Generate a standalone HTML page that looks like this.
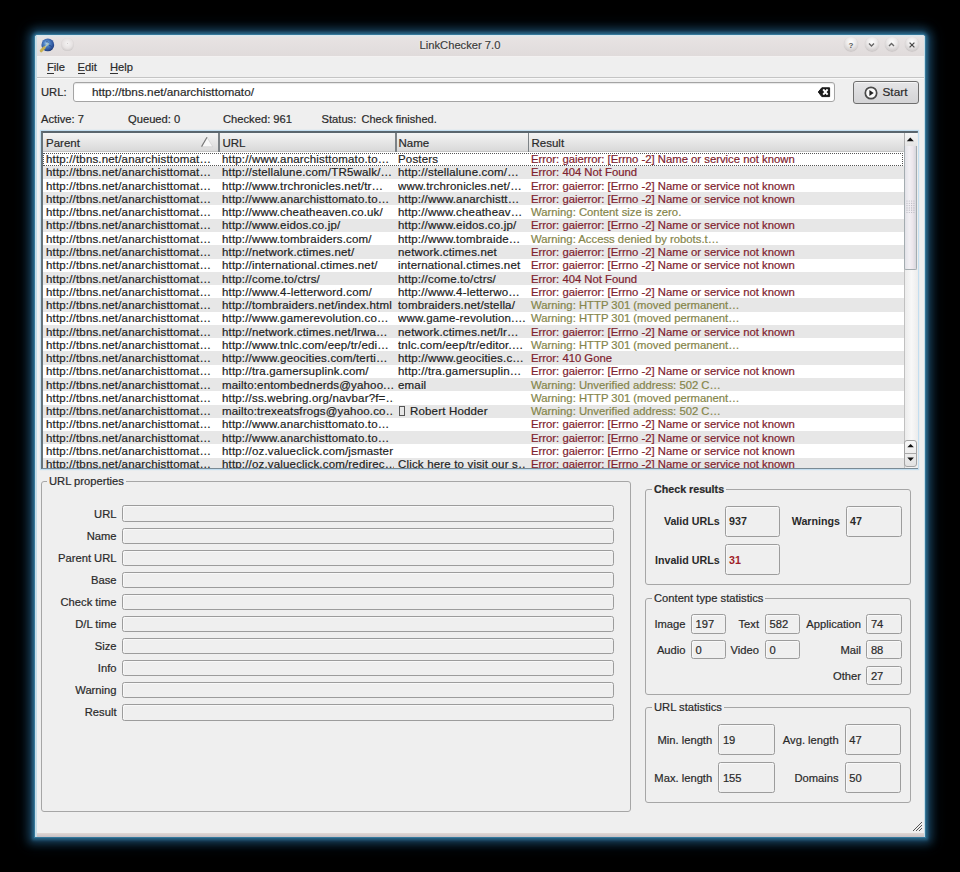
<!DOCTYPE html>
<html><head><meta charset="utf-8"><title>LinkChecker 7.0</title>
<style>
html,body{margin:0;padding:0;}
body{width:960px;height:872px;background:#000;position:relative;overflow:hidden;font-family:"Liberation Sans", sans-serif;}
.t{position:absolute;white-space:pre;line-height:14px;-webkit-text-stroke:0.2px currentColor;}
</style></head><body>
<div style="position:absolute;left:35px;top:35px;width:890px;height:801.5px;background:#efefef;border-radius:3px 3px 0 0;box-shadow:0 0 0 1px #35789a,0 0 3px 3px #286282,0 0 8px 6px #18405a,0 0 15px 8px #07141f;"></div>
<div style="position:absolute;left:35px;top:35px;width:890px;height:20.5px;background:linear-gradient(#e8e4e4,#e0dbdb);border-radius:3px 3px 0 0;"></div>
<div style="position:absolute;left:37px;top:35px;width:886px;height:2px;background:linear-gradient(#d8e8f0,#e4e6e8);"></div>
<div style="position:absolute;left:35px;top:55.5px;width:890px;height:1.5px;background:#f3f1f1;"></div>
<div class="t" style="left:460px;transform:translateX(-50%);top:38px;font-size:11.2px;color:#3c3c3c;font-weight:normal;text-shadow:0 0 2px #fff;">LinkChecker 7.0</div>
<svg style="position:absolute;left:38px;top:36px" width="18" height="18" viewBox="0 0 18 18"><defs><radialGradient id="g1" cx="0.42" cy="0.38" r="0.65"><stop offset="0" stop-color="#a8d0f0"/><stop offset="0.35" stop-color="#4f82c4"/><stop offset="0.8" stop-color="#2a4f98"/><stop offset="1" stop-color="#1c366e"/></radialGradient></defs><circle cx="9.8" cy="8.9" r="6.4" fill="url(#g1)"/><path d="M8 6 Q9 5 10.5 6.5 M11 9.5 Q13 9 13.5 11" stroke="#1e3a70" stroke-width="1" fill="none" opacity="0.6"/><path d="M10.5 7.5 L5 13" stroke="#b8c8b0" stroke-width="1.3"/><path d="M3.2 14.8 L6.2 11.8" stroke="#c8b050" stroke-width="3" stroke-linecap="round"/></svg>
<div style="position:absolute;left:61.3px;top:38.3px;width:12.6px;height:12.6px;border-radius:50%;background:radial-gradient(circle at 50% 42%,#cfcbcb 0%,#f2f0f0 10%,#e6e2e2 50%,#c6c2c2 85%,#aca8a8 100%);"></div>
<div style="position:absolute;left:844px;top:37px;width:14px;height:14px;border-radius:50%;background:radial-gradient(circle at 50% 36%,#fdfdfd 0%,#eceaea 40%,#d2cece 75%,#b2aeae 100%);box-shadow:0 0.5px 1px rgba(0,0,0,0.18);"></div>
<div style="position:absolute;left:864.5px;top:37px;width:14px;height:14px;border-radius:50%;background:radial-gradient(circle at 50% 36%,#fdfdfd 0%,#eceaea 40%,#d2cece 75%,#b2aeae 100%);box-shadow:0 0.5px 1px rgba(0,0,0,0.18);"></div>
<div style="position:absolute;left:884.5px;top:37px;width:14px;height:14px;border-radius:50%;background:radial-gradient(circle at 50% 36%,#fdfdfd 0%,#eceaea 40%,#d2cece 75%,#b2aeae 100%);box-shadow:0 0.5px 1px rgba(0,0,0,0.18);"></div>
<div style="position:absolute;left:905px;top:37px;width:14px;height:14px;border-radius:50%;background:radial-gradient(circle at 50% 36%,#fdfdfd 0%,#eceaea 40%,#d2cece 75%,#b2aeae 100%);box-shadow:0 0.5px 1px rgba(0,0,0,0.18);"></div>
<svg style="position:absolute;left:840px;top:35.5px" width="84" height="18" viewBox="0 0 84 18"><text x="11" y="11.8" font-family="Liberation Sans" font-weight="bold" font-size="8" fill="#555" text-anchor="middle">?</text><path d="M29 7.5 L31.5 10 L34 7.5" stroke="#666" stroke-width="1.4" fill="none"/><path d="M49 10 L51.5 7.5 L54 10" stroke="#666" stroke-width="1.4" fill="none"/><path d="M69.6 6.6 L74.4 11.4 M74.4 6.6 L69.6 11.4" stroke="#484848" stroke-width="1.25" fill="none"/></svg>
<div class="t" style="left:47px;top:60px;font-size:11.2px;color:#2a2a2a;font-weight:normal;">File</div>
<div class="t" style="left:77.5px;top:60px;font-size:11.2px;color:#2a2a2a;font-weight:normal;">Edit</div>
<div class="t" style="left:110px;top:60px;font-size:11.2px;color:#2a2a2a;font-weight:normal;">Help</div>
<div style="position:absolute;left:47px;top:73px;width:7px;height:1px;background:#333;"></div>
<div style="position:absolute;left:77.5px;top:73px;width:7.0px;height:1px;background:#333;"></div>
<div style="position:absolute;left:110px;top:73px;width:8px;height:1px;background:#333;"></div>
<div style="position:absolute;left:35px;top:76.8px;width:890px;height:1.0px;background:#c4c4c4;"></div>
<div style="position:absolute;left:35px;top:77.8px;width:890px;height:1.0px;background:#f8f8f8;"></div>
<div class="t" style="left:41px;top:85px;font-size:11.2px;color:#2a2a2a;font-weight:normal;">URL:</div>
<div style="position:absolute;left:73px;top:82px;width:762px;height:20px;box-sizing:border-box;background:#fff;border:1.5px solid #a4a4a4;border-radius:3px;box-shadow:inset 0 1px 1px rgba(0,0,0,0.10);"></div>
<div class="t" style="left:92px;top:85px;font-size:11.8px;color:#2a2a2a;font-weight:normal;">http://tbns.net/anarchisttomato/</div>
<svg style="position:absolute;left:817px;top:86px" width="14" height="12" viewBox="0 0 14 12"><path d="M1.3 6 L4.8 1.8 H12.6 V10.6 H4.8 Z" fill="#1a1a1a" stroke="#1a1a1a" stroke-width="1" stroke-linejoin="round"/><path d="M6.2 3.4 L10.6 8.6 M10.6 3.4 L6.2 8.6" stroke="#fff" stroke-width="2"/></svg>
<div style="position:absolute;left:853px;top:81px;width:66px;height:22.5px;box-sizing:border-box;background:linear-gradient(#e6e6e8,#dadadc 60%,#d4d4d6);border:1.5px solid #6e6e6e;border-radius:3px;box-shadow:inset 0 1px 0 rgba(255,255,255,0.6);"></div>
<svg style="position:absolute;left:864px;top:85.5px" width="14" height="14" viewBox="0 0 14 14"><circle cx="7" cy="7" r="5.7" fill="#fafafa" stroke="#4a4a4a" stroke-width="1.7"/><path d="M5.4 4.1 L9.7 7 L5.4 9.9 Z" fill="#222"/></svg>
<div class="t" style="left:882.5px;top:85px;font-size:11.8px;color:#2a2a2a;font-weight:normal;">Start</div>
<div class="t" style="left:41px;top:112px;font-size:11.2px;color:#2a2a2a;font-weight:normal;">Active: 7</div>
<div class="t" style="left:128px;top:112px;font-size:11.2px;color:#2a2a2a;font-weight:normal;">Queued: 0</div>
<div class="t" style="left:223px;top:112px;font-size:11.2px;color:#2a2a2a;font-weight:normal;">Checked: 961</div>
<div class="t" style="left:321.5px;top:112px;font-size:11.2px;color:#2a2a2a;font-weight:normal;">Status:</div>
<div class="t" style="left:361.5px;top:112px;font-size:11px;color:#2a2a2a;font-weight:normal;">Check finished.</div>
<div style="position:absolute;left:41px;top:131px;width:877px;height:338px;box-sizing:border-box;background:#fff;border:1.5px solid #7a8a94;border-top:2px solid #5a666e;border-left:2px solid #66747c;box-shadow:0 0 1px 1px rgba(190,220,240,0.9);"></div>
<div style="position:absolute;left:43px;top:152px;width:861px;height:316px;overflow:hidden;">
<div class="t" style="left:3px;top:0px;font-size:11.5px;color:#222;font-weight:normal;letter-spacing:0.17px;width:170px;overflow:hidden;">http://tbns.net/anarchisttomat…</div>
<div class="t" style="left:179px;top:0px;font-size:11.5px;color:#222;font-weight:normal;letter-spacing:0.17px;width:172px;overflow:hidden;">http://www.anarchisttomato.to…</div>
<div class="t" style="left:355px;top:0px;font-size:11.5px;color:#222;font-weight:normal;letter-spacing:0.17px;width:128px;overflow:hidden;">Posters</div>
<div class="t" style="left:488px;top:0px;font-size:11.3px;color:#80222e;font-weight:normal;">Error: gaierror: [Errno -2] Name or service not known</div>
<div style="position:absolute;left:0px;top:13.670000000000016px;width:861px;height:13.27px;background:#e7e7e7;"></div>
<div class="t" style="left:3px;top:13px;font-size:11.5px;color:#222;font-weight:normal;letter-spacing:0.17px;width:170px;overflow:hidden;">http://tbns.net/anarchisttomat…</div>
<div class="t" style="left:179px;top:13px;font-size:11.5px;color:#222;font-weight:normal;letter-spacing:0.17px;width:172px;overflow:hidden;">http://stellalune.com/TR5walk/…</div>
<div class="t" style="left:355px;top:13px;font-size:11.5px;color:#222;font-weight:normal;letter-spacing:0.17px;width:128px;overflow:hidden;">http://stellalune.com/…</div>
<div class="t" style="left:488px;top:13px;font-size:11.3px;color:#80222e;font-weight:normal;">Error: 404 Not Found</div>
<div class="t" style="left:3px;top:27px;font-size:11.5px;color:#222;font-weight:normal;letter-spacing:0.17px;width:170px;overflow:hidden;">http://tbns.net/anarchisttomat…</div>
<div class="t" style="left:179px;top:27px;font-size:11.5px;color:#222;font-weight:normal;letter-spacing:0.17px;width:172px;overflow:hidden;">http://www.trchronicles.net/tr…</div>
<div class="t" style="left:355px;top:27px;font-size:11.5px;color:#222;font-weight:normal;letter-spacing:0.17px;width:128px;overflow:hidden;">www.trchronicles.net/…</div>
<div class="t" style="left:488px;top:27px;font-size:11.3px;color:#80222e;font-weight:normal;">Error: gaierror: [Errno -2] Name or service not known</div>
<div style="position:absolute;left:0px;top:40.21000000000001px;width:861px;height:13.269999999999996px;background:#e7e7e7;"></div>
<div class="t" style="left:3px;top:40px;font-size:11.5px;color:#222;font-weight:normal;letter-spacing:0.17px;width:170px;overflow:hidden;">http://tbns.net/anarchisttomat…</div>
<div class="t" style="left:179px;top:40px;font-size:11.5px;color:#222;font-weight:normal;letter-spacing:0.17px;width:172px;overflow:hidden;">http://www.anarchisttomato.to…</div>
<div class="t" style="left:355px;top:40px;font-size:11.5px;color:#222;font-weight:normal;letter-spacing:0.17px;width:128px;overflow:hidden;">http://www.anarchistt…</div>
<div class="t" style="left:488px;top:40px;font-size:11.3px;color:#80222e;font-weight:normal;">Error: gaierror: [Errno -2] Name or service not known</div>
<div class="t" style="left:3px;top:53px;font-size:11.5px;color:#222;font-weight:normal;letter-spacing:0.17px;width:170px;overflow:hidden;">http://tbns.net/anarchisttomat…</div>
<div class="t" style="left:179px;top:53px;font-size:11.5px;color:#222;font-weight:normal;letter-spacing:0.17px;width:172px;overflow:hidden;">http://www.cheatheaven.co.uk/</div>
<div class="t" style="left:355px;top:53px;font-size:11.5px;color:#222;font-weight:normal;letter-spacing:0.17px;width:128px;overflow:hidden;">http://www.cheatheav…</div>
<div class="t" style="left:488px;top:53px;font-size:11.3px;color:#85854a;font-weight:normal;">Warning: Content size is zero.</div>
<div style="position:absolute;left:0px;top:66.75px;width:861px;height:13.269999999999996px;background:#e7e7e7;"></div>
<div class="t" style="left:3px;top:66px;font-size:11.5px;color:#222;font-weight:normal;letter-spacing:0.17px;width:170px;overflow:hidden;">http://tbns.net/anarchisttomat…</div>
<div class="t" style="left:179px;top:66px;font-size:11.5px;color:#222;font-weight:normal;letter-spacing:0.17px;width:172px;overflow:hidden;">http://www.eidos.co.jp/</div>
<div class="t" style="left:355px;top:66px;font-size:11.5px;color:#222;font-weight:normal;letter-spacing:0.17px;width:128px;overflow:hidden;">http://www.eidos.co.jp/</div>
<div class="t" style="left:488px;top:66px;font-size:11.3px;color:#80222e;font-weight:normal;">Error: gaierror: [Errno -2] Name or service not known</div>
<div class="t" style="left:3px;top:80px;font-size:11.5px;color:#222;font-weight:normal;letter-spacing:0.17px;width:170px;overflow:hidden;">http://tbns.net/anarchisttomat…</div>
<div class="t" style="left:179px;top:80px;font-size:11.5px;color:#222;font-weight:normal;letter-spacing:0.17px;width:172px;overflow:hidden;">http://www.tombraiders.com/</div>
<div class="t" style="left:355px;top:80px;font-size:11.5px;color:#222;font-weight:normal;letter-spacing:0.17px;width:128px;overflow:hidden;">http://www.tombraide…</div>
<div class="t" style="left:488px;top:80px;font-size:11.3px;color:#85854a;font-weight:normal;">Warning: Access denied by robots.t…</div>
<div style="position:absolute;left:0px;top:93.29000000000002px;width:861px;height:13.269999999999996px;background:#e7e7e7;"></div>
<div class="t" style="left:3px;top:93px;font-size:11.5px;color:#222;font-weight:normal;letter-spacing:0.17px;width:170px;overflow:hidden;">http://tbns.net/anarchisttomat…</div>
<div class="t" style="left:179px;top:93px;font-size:11.5px;color:#222;font-weight:normal;letter-spacing:0.17px;width:172px;overflow:hidden;">http://network.ctimes.net/</div>
<div class="t" style="left:355px;top:93px;font-size:11.5px;color:#222;font-weight:normal;letter-spacing:0.17px;width:128px;overflow:hidden;">network.ctimes.net</div>
<div class="t" style="left:488px;top:93px;font-size:11.3px;color:#80222e;font-weight:normal;">Error: gaierror: [Errno -2] Name or service not known</div>
<div class="t" style="left:3px;top:106px;font-size:11.5px;color:#222;font-weight:normal;letter-spacing:0.17px;width:170px;overflow:hidden;">http://tbns.net/anarchisttomat…</div>
<div class="t" style="left:179px;top:106px;font-size:11.5px;color:#222;font-weight:normal;letter-spacing:0.17px;width:172px;overflow:hidden;">http://international.ctimes.net/</div>
<div class="t" style="left:355px;top:106px;font-size:11.5px;color:#222;font-weight:normal;letter-spacing:0.17px;width:128px;overflow:hidden;">international.ctimes.net</div>
<div class="t" style="left:488px;top:106px;font-size:11.3px;color:#80222e;font-weight:normal;">Error: gaierror: [Errno -2] Name or service not known</div>
<div style="position:absolute;left:0px;top:119.82999999999998px;width:861px;height:13.27000000000001px;background:#e7e7e7;"></div>
<div class="t" style="left:3px;top:120px;font-size:11.5px;color:#222;font-weight:normal;letter-spacing:0.17px;width:170px;overflow:hidden;">http://tbns.net/anarchisttomat…</div>
<div class="t" style="left:179px;top:120px;font-size:11.5px;color:#222;font-weight:normal;letter-spacing:0.17px;width:172px;overflow:hidden;">http://come.to/ctrs/</div>
<div class="t" style="left:355px;top:120px;font-size:11.5px;color:#222;font-weight:normal;letter-spacing:0.17px;width:128px;overflow:hidden;">http://come.to/ctrs/</div>
<div class="t" style="left:488px;top:120px;font-size:11.3px;color:#80222e;font-weight:normal;">Error: 404 Not Found</div>
<div class="t" style="left:3px;top:133px;font-size:11.5px;color:#222;font-weight:normal;letter-spacing:0.17px;width:170px;overflow:hidden;">http://tbns.net/anarchisttomat…</div>
<div class="t" style="left:179px;top:133px;font-size:11.5px;color:#222;font-weight:normal;letter-spacing:0.17px;width:172px;overflow:hidden;">http://www.4-letterword.com/</div>
<div class="t" style="left:355px;top:133px;font-size:11.5px;color:#222;font-weight:normal;letter-spacing:0.17px;width:128px;overflow:hidden;">http://www.4-letterwo…</div>
<div class="t" style="left:488px;top:133px;font-size:11.3px;color:#80222e;font-weight:normal;">Error: gaierror: [Errno -2] Name or service not known</div>
<div style="position:absolute;left:0px;top:146.37px;width:861px;height:13.27000000000001px;background:#e7e7e7;"></div>
<div class="t" style="left:3px;top:146px;font-size:11.5px;color:#222;font-weight:normal;letter-spacing:0.17px;width:170px;overflow:hidden;">http://tbns.net/anarchisttomat…</div>
<div class="t" style="left:179px;top:146px;font-size:11.5px;color:#222;font-weight:normal;letter-spacing:0.17px;width:172px;overflow:hidden;">http://tombraiders.net/index.html</div>
<div class="t" style="left:355px;top:146px;font-size:11.5px;color:#222;font-weight:normal;letter-spacing:0.17px;width:128px;overflow:hidden;">tombraiders.net/stella/</div>
<div class="t" style="left:488px;top:146px;font-size:11.3px;color:#85854a;font-weight:normal;">Warning: HTTP 301 (moved permanent…</div>
<div class="t" style="left:3px;top:159px;font-size:11.5px;color:#222;font-weight:normal;letter-spacing:0.17px;width:170px;overflow:hidden;">http://tbns.net/anarchisttomat…</div>
<div class="t" style="left:179px;top:159px;font-size:11.5px;color:#222;font-weight:normal;letter-spacing:0.17px;width:172px;overflow:hidden;">http://www.gamerevolution.co…</div>
<div class="t" style="left:355px;top:159px;font-size:11.5px;color:#222;font-weight:normal;letter-spacing:0.17px;width:128px;overflow:hidden;">www.game-revolution.…</div>
<div class="t" style="left:488px;top:159px;font-size:11.3px;color:#85854a;font-weight:normal;">Warning: HTTP 301 (moved permanent…</div>
<div style="position:absolute;left:0px;top:172.90999999999997px;width:861px;height:13.27000000000001px;background:#e7e7e7;"></div>
<div class="t" style="left:3px;top:173px;font-size:11.5px;color:#222;font-weight:normal;letter-spacing:0.17px;width:170px;overflow:hidden;">http://tbns.net/anarchisttomat…</div>
<div class="t" style="left:179px;top:173px;font-size:11.5px;color:#222;font-weight:normal;letter-spacing:0.17px;width:172px;overflow:hidden;">http://network.ctimes.net/lrwa…</div>
<div class="t" style="left:355px;top:173px;font-size:11.5px;color:#222;font-weight:normal;letter-spacing:0.17px;width:128px;overflow:hidden;">network.ctimes.net/lr…</div>
<div class="t" style="left:488px;top:173px;font-size:11.3px;color:#80222e;font-weight:normal;">Error: gaierror: [Errno -2] Name or service not known</div>
<div class="t" style="left:3px;top:186px;font-size:11.5px;color:#222;font-weight:normal;letter-spacing:0.17px;width:170px;overflow:hidden;">http://tbns.net/anarchisttomat…</div>
<div class="t" style="left:179px;top:186px;font-size:11.5px;color:#222;font-weight:normal;letter-spacing:0.17px;width:172px;overflow:hidden;">http://www.tnlc.com/eep/tr/edi…</div>
<div class="t" style="left:355px;top:186px;font-size:11.5px;color:#222;font-weight:normal;letter-spacing:0.17px;width:128px;overflow:hidden;">tnlc.com/eep/tr/editor.…</div>
<div class="t" style="left:488px;top:186px;font-size:11.3px;color:#85854a;font-weight:normal;">Warning: HTTP 301 (moved permanent…</div>
<div style="position:absolute;left:0px;top:199.45px;width:861px;height:13.27000000000001px;background:#e7e7e7;"></div>
<div class="t" style="left:3px;top:199px;font-size:11.5px;color:#222;font-weight:normal;letter-spacing:0.17px;width:170px;overflow:hidden;">http://tbns.net/anarchisttomat…</div>
<div class="t" style="left:179px;top:199px;font-size:11.5px;color:#222;font-weight:normal;letter-spacing:0.17px;width:172px;overflow:hidden;">http://www.geocities.com/terti…</div>
<div class="t" style="left:355px;top:199px;font-size:11.5px;color:#222;font-weight:normal;letter-spacing:0.17px;width:128px;overflow:hidden;">http://www.geocities.c…</div>
<div class="t" style="left:488px;top:199px;font-size:11.3px;color:#80222e;font-weight:normal;">Error: 410 Gone</div>
<div class="t" style="left:3px;top:212px;font-size:11.5px;color:#222;font-weight:normal;letter-spacing:0.17px;width:170px;overflow:hidden;">http://tbns.net/anarchisttomat…</div>
<div class="t" style="left:179px;top:212px;font-size:11.5px;color:#222;font-weight:normal;letter-spacing:0.17px;width:172px;overflow:hidden;">http://tra.gamersuplink.com/</div>
<div class="t" style="left:355px;top:212px;font-size:11.5px;color:#222;font-weight:normal;letter-spacing:0.17px;width:128px;overflow:hidden;">http://tra.gamersuplin…</div>
<div class="t" style="left:488px;top:212px;font-size:11.3px;color:#80222e;font-weight:normal;">Error: gaierror: [Errno -2] Name or service not known</div>
<div style="position:absolute;left:0px;top:225.99px;width:861px;height:13.27000000000001px;background:#e7e7e7;"></div>
<div class="t" style="left:3px;top:226px;font-size:11.5px;color:#222;font-weight:normal;letter-spacing:0.17px;width:170px;overflow:hidden;">http://tbns.net/anarchisttomat…</div>
<div class="t" style="left:179px;top:226px;font-size:11.5px;color:#222;font-weight:normal;letter-spacing:0.17px;width:172px;overflow:hidden;">mailto:entombednerds@yahoo.…</div>
<div class="t" style="left:355px;top:226px;font-size:11.5px;color:#222;font-weight:normal;letter-spacing:0.17px;width:128px;overflow:hidden;">email</div>
<div class="t" style="left:488px;top:226px;font-size:11.3px;color:#85854a;font-weight:normal;">Warning: Unverified address: 502 C…</div>
<div class="t" style="left:3px;top:239px;font-size:11.5px;color:#222;font-weight:normal;letter-spacing:0.17px;width:170px;overflow:hidden;">http://tbns.net/anarchisttomat…</div>
<div class="t" style="left:179px;top:239px;font-size:11.5px;color:#222;font-weight:normal;letter-spacing:0.17px;width:172px;overflow:hidden;">http://ss.webring.org/navbar?f=…</div>
<div class="t" style="left:355px;top:239px;font-size:11.5px;color:#222;font-weight:normal;letter-spacing:0.17px;width:128px;overflow:hidden;"></div>
<div class="t" style="left:488px;top:239px;font-size:11.3px;color:#85854a;font-weight:normal;">Warning: HTTP 301 (moved permanent…</div>
<div style="position:absolute;left:0px;top:252.52999999999997px;width:861px;height:13.269999999999982px;background:#e7e7e7;"></div>
<div class="t" style="left:3px;top:252px;font-size:11.5px;color:#222;font-weight:normal;letter-spacing:0.17px;width:170px;overflow:hidden;">http://tbns.net/anarchisttomat…</div>
<div class="t" style="left:179px;top:252px;font-size:11.5px;color:#222;font-weight:normal;letter-spacing:0.17px;width:172px;overflow:hidden;">mailto:trexeatsfrogs@yahoo.co…</div>
<div class="t" style="left:355px;top:252px;font-size:11.5px;color:#222;font-weight:normal;letter-spacing:0.17px;width:128px;overflow:hidden;"><span style="display:inline-block;width:4px;height:8px;border:1px solid #555;vertical-align:-1px;margin:0 5px 0 1px;-webkit-text-stroke:0;"></span>Robert Hodder</div>
<div class="t" style="left:488px;top:252px;font-size:11.3px;color:#85854a;font-weight:normal;">Warning: Unverified address: 502 C…</div>
<div class="t" style="left:3px;top:265px;font-size:11.5px;color:#222;font-weight:normal;letter-spacing:0.17px;width:170px;overflow:hidden;">http://tbns.net/anarchisttomat…</div>
<div class="t" style="left:179px;top:265px;font-size:11.5px;color:#222;font-weight:normal;letter-spacing:0.17px;width:172px;overflow:hidden;">http://www.anarchisttomato.to…</div>
<div class="t" style="left:355px;top:265px;font-size:11.5px;color:#222;font-weight:normal;letter-spacing:0.17px;width:128px;overflow:hidden;"></div>
<div class="t" style="left:488px;top:265px;font-size:11.3px;color:#80222e;font-weight:normal;">Error: gaierror: [Errno -2] Name or service not known</div>
<div style="position:absolute;left:0px;top:279.07000000000005px;width:861px;height:13.269999999999982px;background:#e7e7e7;"></div>
<div class="t" style="left:3px;top:279px;font-size:11.5px;color:#222;font-weight:normal;letter-spacing:0.17px;width:170px;overflow:hidden;">http://tbns.net/anarchisttomat…</div>
<div class="t" style="left:179px;top:279px;font-size:11.5px;color:#222;font-weight:normal;letter-spacing:0.17px;width:172px;overflow:hidden;">http://www.anarchisttomato.to…</div>
<div class="t" style="left:355px;top:279px;font-size:11.5px;color:#222;font-weight:normal;letter-spacing:0.17px;width:128px;overflow:hidden;"></div>
<div class="t" style="left:488px;top:279px;font-size:11.3px;color:#80222e;font-weight:normal;">Error: gaierror: [Errno -2] Name or service not known</div>
<div class="t" style="left:3px;top:292px;font-size:11.5px;color:#222;font-weight:normal;letter-spacing:0.17px;width:170px;overflow:hidden;">http://tbns.net/anarchisttomat…</div>
<div class="t" style="left:179px;top:292px;font-size:11.5px;color:#222;font-weight:normal;letter-spacing:0.17px;width:172px;overflow:hidden;">http://oz.valueclick.com/jsmaster</div>
<div class="t" style="left:355px;top:292px;font-size:11.5px;color:#222;font-weight:normal;letter-spacing:0.17px;width:128px;overflow:hidden;"></div>
<div class="t" style="left:488px;top:292px;font-size:11.3px;color:#80222e;font-weight:normal;">Error: gaierror: [Errno -2] Name or service not known</div>
<div style="position:absolute;left:0px;top:305.61px;width:861px;height:13.269999999999982px;background:#e7e7e7;"></div>
<div class="t" style="left:3px;top:305px;font-size:11.5px;color:#222;font-weight:normal;letter-spacing:0.17px;width:170px;overflow:hidden;">http://tbns.net/anarchisttomat…</div>
<div class="t" style="left:179px;top:305px;font-size:11.5px;color:#222;font-weight:normal;letter-spacing:0.17px;width:172px;overflow:hidden;">http://oz.valueclick.com/redirec…</div>
<div class="t" style="left:355px;top:305px;font-size:11.5px;color:#222;font-weight:normal;letter-spacing:0.17px;width:128px;overflow:hidden;">Click here to visit our s…</div>
<div class="t" style="left:488px;top:305px;font-size:11.3px;color:#80222e;font-weight:normal;">Error: gaierror: [Errno -2] Name or service not known</div>
<div style="position:absolute;left:0px;top:0.5px;width:860px;height:13.1px;box-sizing:border-box;border:1px dotted #555;"></div>
</div>
<div style="position:absolute;left:43px;top:133px;width:860.5px;height:19px;background:linear-gradient(#f4f4f4,#e6e6e6 50%,#d9d9d9);border-bottom:1px solid #c4c4c4;box-sizing:border-box;"></div>
<div style="position:absolute;left:218px;top:133px;width:1.5px;height:19px;background:#7c8286;"></div>
<div style="position:absolute;left:395px;top:133px;width:1.5px;height:19px;background:#7c8286;"></div>
<div style="position:absolute;left:527.5px;top:133px;width:1.5px;height:19px;background:#7c8286;"></div>
<div class="t" style="left:46px;top:136px;font-size:11.5px;color:#2a2a2a;font-weight:normal;">Parent</div>
<div class="t" style="left:222.5px;top:136px;font-size:11.5px;color:#2a2a2a;font-weight:normal;">URL</div>
<div class="t" style="left:398.5px;top:136px;font-size:11.5px;color:#2a2a2a;font-weight:normal;">Name</div>
<div class="t" style="left:531.5px;top:136px;font-size:11.5px;color:#2a2a2a;font-weight:normal;">Result</div>
<svg style="position:absolute;left:200px;top:136px" width="14" height="12" viewBox="0 0 14 12"><path d="M7 1.3 L12.8 10.8 H1.2 Z" fill="#f8f8f8" stroke="#d0d0d0" stroke-width="0.7"/><path d="M7 1.3 L1.6 10.6" stroke="#777" stroke-width="1.1"/></svg>
<div style="position:absolute;left:903.5px;top:133px;width:14.0px;height:334.5px;background:linear-gradient(90deg,#ececec,#f8f8f8 50%,#ececec);border-left:1px solid #c0c0c0;box-sizing:border-box;"></div>
<div style="position:absolute;left:903.8px;top:133px;width:13.700000000000045px;height:13.5px;background:linear-gradient(#f6f6f6,#e4e4e4);border-bottom:1.5px solid #8a9298;border-left:1px solid #b0b0b0;box-sizing:border-box;"></div>
<svg style="position:absolute;left:905px;top:135px" width="11" height="10" viewBox="0 0 11 10"><path d="M1.8 6.3 L5.3 2.6 L8.8 6.3 Z" fill="#111"/></svg>
<div style="position:absolute;left:903.8px;top:146px;width:13.700000000000045px;height:124px;background:linear-gradient(90deg,#e2e2e8,#f2f0f4 40%,#ece6ec 70%,#d6d6dc);border:1px solid #a4acb0;border-top:none;border-radius:0 0 2px 2px;box-sizing:border-box;"></div>
<svg style="position:absolute;left:905px;top:199px" width="11" height="16" viewBox="0 0 11 16"><circle cx="2.0" cy="2.0" r="0.6" fill="#b8b8c0"/><circle cx="2.0" cy="4.3" r="0.6" fill="#b8b8c0"/><circle cx="2.0" cy="6.6" r="0.6" fill="#b8b8c0"/><circle cx="2.0" cy="8.9" r="0.6" fill="#b8b8c0"/><circle cx="2.0" cy="11.2" r="0.6" fill="#b8b8c0"/><circle cx="2.0" cy="13.5" r="0.6" fill="#b8b8c0"/><circle cx="4.3" cy="2.0" r="0.6" fill="#b8b8c0"/><circle cx="4.3" cy="4.3" r="0.6" fill="#b8b8c0"/><circle cx="4.3" cy="6.6" r="0.6" fill="#b8b8c0"/><circle cx="4.3" cy="8.9" r="0.6" fill="#b8b8c0"/><circle cx="4.3" cy="11.2" r="0.6" fill="#b8b8c0"/><circle cx="4.3" cy="13.5" r="0.6" fill="#b8b8c0"/><circle cx="6.6" cy="2.0" r="0.6" fill="#b8b8c0"/><circle cx="6.6" cy="4.3" r="0.6" fill="#b8b8c0"/><circle cx="6.6" cy="6.6" r="0.6" fill="#b8b8c0"/><circle cx="6.6" cy="8.9" r="0.6" fill="#b8b8c0"/><circle cx="6.6" cy="11.2" r="0.6" fill="#b8b8c0"/><circle cx="6.6" cy="13.5" r="0.6" fill="#b8b8c0"/><circle cx="8.9" cy="2.0" r="0.6" fill="#b8b8c0"/><circle cx="8.9" cy="4.3" r="0.6" fill="#b8b8c0"/><circle cx="8.9" cy="6.6" r="0.6" fill="#b8b8c0"/><circle cx="8.9" cy="8.9" r="0.6" fill="#b8b8c0"/><circle cx="8.9" cy="11.2" r="0.6" fill="#b8b8c0"/><circle cx="8.9" cy="13.5" r="0.6" fill="#b8b8c0"/></svg>
<div style="position:absolute;left:903.5px;top:439.5px;width:13.5px;height:27.0px;background:linear-gradient(#f8f8f8,#e2e2e2);border:1px solid #a4a4a4;border-radius:3px;box-sizing:border-box;"></div>
<div style="position:absolute;left:904px;top:452.5px;width:12.5px;height:1.0px;background:#a8a8a8;"></div>
<svg style="position:absolute;left:905px;top:441px" width="11" height="24" viewBox="0 0 11 24"><path d="M2.3 6.3 L5.6 2.9 L8.9 6.3 Z" fill="#111"/><path d="M2.3 16.6 L5.6 20 L8.9 16.6 Z" fill="#111"/></svg>
<div style="position:absolute;left:40.5px;top:480.5px;width:590.5px;height:331.0px;box-sizing:border-box;border:1.5px solid #a6a6a6;border-radius:3px;"></div>
<div class="t" style="left:47px;top:474.5px;padding:0 2px;background:#efefef;font-size:11.2px;line-height:12px;color:#2a2a2a;font-weight:normal;">URL properties</div>
<div style="position:absolute;left:121.5px;top:505.4px;width:492.0px;height:16.299999999999955px;box-sizing:border-box;border:1.5px solid #9c9c9c;border-radius:2.5px;background:#efefef;box-shadow:inset 1px 1px 1px rgba(255,255,255,0.6);"></div>
<div class="t" style="right:843.5px;top:507px;font-size:11.2px;color:#2a2a2a;font-weight:normal;">URL</div>
<div style="position:absolute;left:121.5px;top:527.5px;width:492.0px;height:16.299999999999955px;box-sizing:border-box;border:1.5px solid #9c9c9c;border-radius:2.5px;background:#efefef;box-shadow:inset 1px 1px 1px rgba(255,255,255,0.6);"></div>
<div class="t" style="right:843.5px;top:529px;font-size:11.2px;color:#2a2a2a;font-weight:normal;">Name</div>
<div style="position:absolute;left:121.5px;top:549.6px;width:492.0px;height:16.299999999999955px;box-sizing:border-box;border:1.5px solid #9c9c9c;border-radius:2.5px;background:#efefef;box-shadow:inset 1px 1px 1px rgba(255,255,255,0.6);"></div>
<div class="t" style="right:843.5px;top:551px;font-size:11.2px;color:#2a2a2a;font-weight:normal;">Parent URL</div>
<div style="position:absolute;left:121.5px;top:571.7px;width:492.0px;height:16.299999999999955px;box-sizing:border-box;border:1.5px solid #9c9c9c;border-radius:2.5px;background:#efefef;box-shadow:inset 1px 1px 1px rgba(255,255,255,0.6);"></div>
<div class="t" style="right:843.5px;top:573px;font-size:11.2px;color:#2a2a2a;font-weight:normal;">Base</div>
<div style="position:absolute;left:121.5px;top:593.8px;width:492.0px;height:16.299999999999955px;box-sizing:border-box;border:1.5px solid #9c9c9c;border-radius:2.5px;background:#efefef;box-shadow:inset 1px 1px 1px rgba(255,255,255,0.6);"></div>
<div class="t" style="right:843.5px;top:595px;font-size:11.2px;color:#2a2a2a;font-weight:normal;">Check time</div>
<div style="position:absolute;left:121.5px;top:615.9px;width:492.0px;height:16.299999999999955px;box-sizing:border-box;border:1.5px solid #9c9c9c;border-radius:2.5px;background:#efefef;box-shadow:inset 1px 1px 1px rgba(255,255,255,0.6);"></div>
<div class="t" style="right:843.5px;top:617px;font-size:11.2px;color:#2a2a2a;font-weight:normal;">D/L time</div>
<div style="position:absolute;left:121.5px;top:638.0px;width:492.0px;height:16.299999999999955px;box-sizing:border-box;border:1.5px solid #9c9c9c;border-radius:2.5px;background:#efefef;box-shadow:inset 1px 1px 1px rgba(255,255,255,0.6);"></div>
<div class="t" style="right:843.5px;top:639px;font-size:11.2px;color:#2a2a2a;font-weight:normal;">Size</div>
<div style="position:absolute;left:121.5px;top:660.1px;width:492.0px;height:16.299999999999955px;box-sizing:border-box;border:1.5px solid #9c9c9c;border-radius:2.5px;background:#efefef;box-shadow:inset 1px 1px 1px rgba(255,255,255,0.6);"></div>
<div class="t" style="right:843.5px;top:661px;font-size:11.2px;color:#2a2a2a;font-weight:normal;">Info</div>
<div style="position:absolute;left:121.5px;top:682.2px;width:492.0px;height:16.299999999999955px;box-sizing:border-box;border:1.5px solid #9c9c9c;border-radius:2.5px;background:#efefef;box-shadow:inset 1px 1px 1px rgba(255,255,255,0.6);"></div>
<div class="t" style="right:843.5px;top:683px;font-size:11.2px;color:#2a2a2a;font-weight:normal;">Warning</div>
<div style="position:absolute;left:121.5px;top:704.3px;width:492.0px;height:16.299999999999955px;box-sizing:border-box;border:1.5px solid #9c9c9c;border-radius:2.5px;background:#efefef;box-shadow:inset 1px 1px 1px rgba(255,255,255,0.6);"></div>
<div class="t" style="right:843.5px;top:705px;font-size:11.2px;color:#2a2a2a;font-weight:normal;">Result</div>
<div style="position:absolute;left:645px;top:489px;width:266px;height:96px;box-sizing:border-box;border:1.5px solid #a6a6a6;border-radius:3px;"></div>
<div class="t" style="left:652px;top:483px;padding:0 2px;background:#efefef;font-size:10.7px;line-height:12px;color:#2a2a2a;font-weight:bold;">Check results</div>
<div style="position:absolute;left:725.3px;top:505.8px;width:55.200000000000045px;height:31.69999999999999px;box-sizing:border-box;border:1.5px solid #9c9c9c;border-radius:2.5px;background:#efefef;box-shadow:inset 1px 1px 1px rgba(255,255,255,0.6);"></div>
<div style="position:absolute;left:846.4px;top:505.8px;width:55.200000000000045px;height:31.69999999999999px;box-sizing:border-box;border:1.5px solid #9c9c9c;border-radius:2.5px;background:#efefef;box-shadow:inset 1px 1px 1px rgba(255,255,255,0.6);"></div>
<div style="position:absolute;left:725.3px;top:543.8px;width:55.200000000000045px;height:31.700000000000045px;box-sizing:border-box;border:1.5px solid #9c9c9c;border-radius:2.5px;background:#efefef;box-shadow:inset 1px 1px 1px rgba(255,255,255,0.6);"></div>
<div class="t" style="right:240.29999999999995px;top:514px;font-size:10.7px;color:#2a2a2a;font-weight:bold;-webkit-text-stroke:0;">Valid URLs</div>
<div class="t" style="right:120px;top:514px;font-size:10.7px;color:#2a2a2a;font-weight:bold;-webkit-text-stroke:0;">Warnings</div>
<div class="t" style="right:240.29999999999995px;top:553px;font-size:10.7px;color:#2a2a2a;font-weight:bold;-webkit-text-stroke:0;">Invalid URLs</div>
<div class="t" style="left:729px;top:514px;font-size:10.7px;color:#2a2a2a;font-weight:bold;-webkit-text-stroke:0;">937</div>
<div class="t" style="left:850px;top:514px;font-size:10.7px;color:#2a2a2a;font-weight:bold;-webkit-text-stroke:0;">47</div>
<div class="t" style="left:729px;top:553px;font-size:10.7px;color:#a01c28;font-weight:bold;-webkit-text-stroke:0;">31</div>
<div style="position:absolute;left:645px;top:597.5px;width:266px;height:97.0px;box-sizing:border-box;border:1.5px solid #a6a6a6;border-radius:3px;"></div>
<div class="t" style="left:652px;top:591.5px;padding:0 2px;background:#efefef;font-size:11.2px;line-height:12px;color:#2a2a2a;font-weight:normal;">Content type statistics</div>
<div style="position:absolute;left:691px;top:614.4px;width:34.60000000000002px;height:19.399999999999977px;box-sizing:border-box;border:1.5px solid #9c9c9c;border-radius:2.5px;background:#efefef;box-shadow:inset 1px 1px 1px rgba(255,255,255,0.6);"></div>
<div class="t" style="right:274.5px;top:617px;font-size:11.2px;color:#2a2a2a;font-weight:normal;">Image</div>
<div class="t" style="left:695.5px;top:617px;font-size:11.2px;color:#2a2a2a;font-weight:normal;">197</div>
<div style="position:absolute;left:765px;top:614.4px;width:34.5px;height:19.399999999999977px;box-sizing:border-box;border:1.5px solid #9c9c9c;border-radius:2.5px;background:#efefef;box-shadow:inset 1px 1px 1px rgba(255,255,255,0.6);"></div>
<div class="t" style="right:201px;top:617px;font-size:11.2px;color:#2a2a2a;font-weight:normal;">Text</div>
<div class="t" style="left:769.5px;top:617px;font-size:11.2px;color:#2a2a2a;font-weight:normal;">582</div>
<div style="position:absolute;left:866.4px;top:614.4px;width:35.200000000000045px;height:19.399999999999977px;box-sizing:border-box;border:1.5px solid #9c9c9c;border-radius:2.5px;background:#efefef;box-shadow:inset 1px 1px 1px rgba(255,255,255,0.6);"></div>
<div class="t" style="right:99px;top:617px;font-size:11.2px;color:#2a2a2a;font-weight:normal;">Application</div>
<div class="t" style="left:870.9px;top:617px;font-size:11.2px;color:#2a2a2a;font-weight:normal;">74</div>
<div style="position:absolute;left:691px;top:640px;width:34.60000000000002px;height:19.399999999999977px;box-sizing:border-box;border:1.5px solid #9c9c9c;border-radius:2.5px;background:#efefef;box-shadow:inset 1px 1px 1px rgba(255,255,255,0.6);"></div>
<div class="t" style="right:274.5px;top:643px;font-size:11.2px;color:#2a2a2a;font-weight:normal;">Audio</div>
<div class="t" style="left:695.5px;top:643px;font-size:11.2px;color:#2a2a2a;font-weight:normal;">0</div>
<div style="position:absolute;left:765px;top:640px;width:34.5px;height:19.399999999999977px;box-sizing:border-box;border:1.5px solid #9c9c9c;border-radius:2.5px;background:#efefef;box-shadow:inset 1px 1px 1px rgba(255,255,255,0.6);"></div>
<div class="t" style="right:201px;top:643px;font-size:11.2px;color:#2a2a2a;font-weight:normal;">Video</div>
<div class="t" style="left:769.5px;top:643px;font-size:11.2px;color:#2a2a2a;font-weight:normal;">0</div>
<div style="position:absolute;left:866.4px;top:640px;width:35.200000000000045px;height:19.399999999999977px;box-sizing:border-box;border:1.5px solid #9c9c9c;border-radius:2.5px;background:#efefef;box-shadow:inset 1px 1px 1px rgba(255,255,255,0.6);"></div>
<div class="t" style="right:99px;top:643px;font-size:11.2px;color:#2a2a2a;font-weight:normal;">Mail</div>
<div class="t" style="left:870.9px;top:643px;font-size:11.2px;color:#2a2a2a;font-weight:normal;">88</div>
<div style="position:absolute;left:866.4px;top:665.8px;width:35.200000000000045px;height:19.399999999999977px;box-sizing:border-box;border:1.5px solid #9c9c9c;border-radius:2.5px;background:#efefef;box-shadow:inset 1px 1px 1px rgba(255,255,255,0.6);"></div>
<div class="t" style="right:99px;top:669px;font-size:11.2px;color:#2a2a2a;font-weight:normal;">Other</div>
<div class="t" style="left:870.9px;top:669px;font-size:11.2px;color:#2a2a2a;font-weight:normal;">27</div>
<div style="position:absolute;left:645px;top:707px;width:266px;height:96px;box-sizing:border-box;border:1.5px solid #a6a6a6;border-radius:3px;"></div>
<div class="t" style="left:652px;top:701px;padding:0 2px;background:#efefef;font-size:11.2px;line-height:12px;color:#2a2a2a;font-weight:normal;">URL statistics</div>
<div style="position:absolute;left:718.4px;top:723.8px;width:56.30000000000007px;height:31.700000000000045px;box-sizing:border-box;border:1.5px solid #9c9c9c;border-radius:2.5px;background:#efefef;box-shadow:inset 1px 1px 1px rgba(255,255,255,0.6);"></div>
<div class="t" style="right:247.79999999999995px;top:733px;font-size:11.2px;color:#2a2a2a;font-weight:normal;">Min. length</div>
<div class="t" style="left:722.9px;top:733px;font-size:11.2px;color:#2a2a2a;font-weight:normal;">19</div>
<div style="position:absolute;left:844.8px;top:723.8px;width:56.60000000000002px;height:31.700000000000045px;box-sizing:border-box;border:1.5px solid #9c9c9c;border-radius:2.5px;background:#efefef;box-shadow:inset 1px 1px 1px rgba(255,255,255,0.6);"></div>
<div class="t" style="right:121.39999999999998px;top:733px;font-size:11.2px;color:#2a2a2a;font-weight:normal;">Avg. length</div>
<div class="t" style="left:849.3px;top:733px;font-size:11.2px;color:#2a2a2a;font-weight:normal;">47</div>
<div style="position:absolute;left:718.4px;top:761.8px;width:56.30000000000007px;height:31.700000000000045px;box-sizing:border-box;border:1.5px solid #9c9c9c;border-radius:2.5px;background:#efefef;box-shadow:inset 1px 1px 1px rgba(255,255,255,0.6);"></div>
<div class="t" style="right:247.79999999999995px;top:771px;font-size:11.2px;color:#2a2a2a;font-weight:normal;">Max. length</div>
<div class="t" style="left:722.9px;top:771px;font-size:11.2px;color:#2a2a2a;font-weight:normal;">155</div>
<div style="position:absolute;left:844.8px;top:761.8px;width:56.60000000000002px;height:31.700000000000045px;box-sizing:border-box;border:1.5px solid #9c9c9c;border-radius:2.5px;background:#efefef;box-shadow:inset 1px 1px 1px rgba(255,255,255,0.6);"></div>
<div class="t" style="right:121.39999999999998px;top:771px;font-size:11.2px;color:#2a2a2a;font-weight:normal;">Domains</div>
<div class="t" style="left:849.3px;top:771px;font-size:11.2px;color:#2a2a2a;font-weight:normal;">50</div>
<div style="position:absolute;left:35px;top:833px;width:890px;height:3.5px;background:linear-gradient(#e0d8d4,#c8c0c4);"></div>
<div style="position:absolute;left:923.5px;top:36px;width:1.5px;height:800.5px;background:#c4dde8;"></div>
<div style="position:absolute;left:35px;top:36px;width:1.5px;height:800.5px;background:#c4dde8;"></div>
<svg style="position:absolute;left:911px;top:820px" width="12" height="12" viewBox="0 0 12 12"><path d="M2 11 L11 2 M5 11 L11 5 M8 11 L11 8" stroke="#555" stroke-width="1"/></svg>
</body></html>
